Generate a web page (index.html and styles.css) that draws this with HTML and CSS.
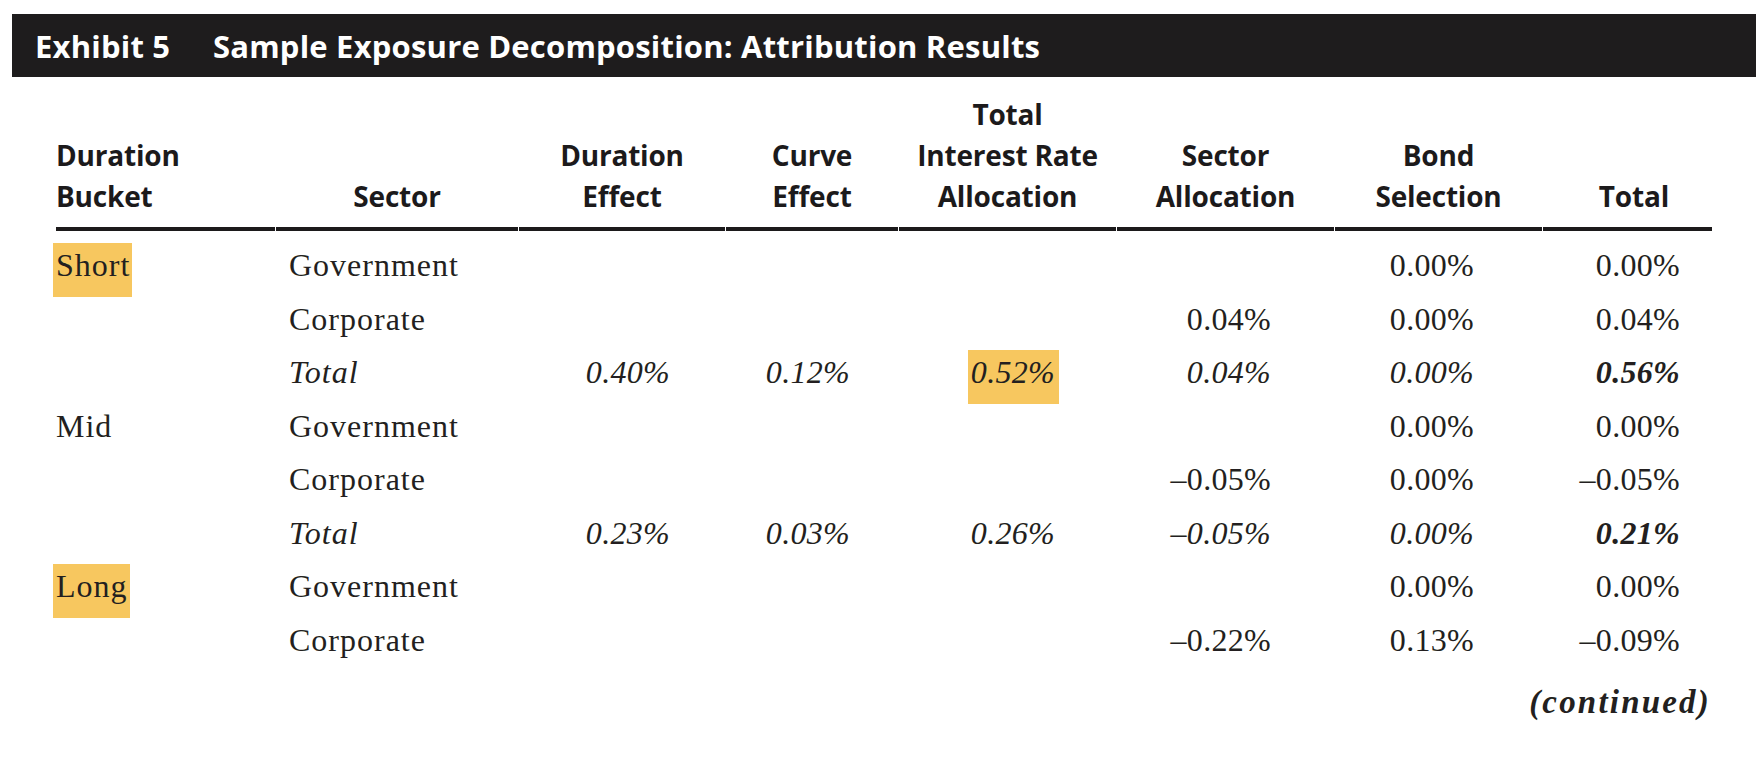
FILE: index.html
```html
<!DOCTYPE html>
<html lang="en">
<head>
<meta charset="utf-8">
<title>Exhibit 5</title>
<link rel="stylesheet" href="styles.css">
</head>
<body>
<div class="exhibit-bar">
  <span class="exhibit-label">Exhibit 5</span>
  <span class="exhibit-title">Sample Exposure Decomposition: Attribution Results</span>
</div>
<table class="attr">
  <colgroup>
    <col class="c1"><col class="c2"><col class="c3"><col class="c4"><col class="c5"><col class="c6"><col class="c7"><col class="c8">
  </colgroup>
  <thead>
    <tr>
      <th class="h-left">Duration<br>Bucket</th>
      <th>Sector</th>
      <th>Duration<br>Effect</th>
      <th>Curve<br>Effect</th>
      <th>Total<br>Interest Rate<br>Allocation</th>
      <th>Sector<br>Allocation</th>
      <th>Bond<br>Selection</th>
      <th class="h-total">Total</th>
    </tr>
  </thead>
  <tbody>
    <tr class="first">
      <td class="d1"><span class="hl hl-left">Short</span></td>
      <td class="d2">Government</td>
      <td class="num d3"></td><td class="num d4"></td><td class="num d5"></td><td class="num d6"></td>
      <td class="num d7">0.00%</td><td class="num d8">0.00%</td>
    </tr>
    <tr>
      <td class="d1"></td>
      <td class="d2">Corporate</td>
      <td class="num d3"></td><td class="num d4"></td><td class="num d5"></td>
      <td class="num d6">0.04%</td><td class="num d7">0.00%</td><td class="num d8">0.04%</td>
    </tr>
    <tr class="sub">
      <td class="d1"></td>
      <td class="d2">Total</td>
      <td class="num d3">0.40%</td><td class="num d4">0.12%</td>
      <td class="num d5"><span class="hl hl-right">0.52%</span></td>
      <td class="num d6">0.04%</td><td class="num d7">0.00%</td><td class="num d8 grand">0.56%</td>
    </tr>
    <tr>
      <td class="d1">Mid</td>
      <td class="d2">Government</td>
      <td class="num d3"></td><td class="num d4"></td><td class="num d5"></td><td class="num d6"></td>
      <td class="num d7">0.00%</td><td class="num d8">0.00%</td>
    </tr>
    <tr>
      <td class="d1"></td>
      <td class="d2">Corporate</td>
      <td class="num d3"></td><td class="num d4"></td><td class="num d5"></td>
      <td class="num d6">–0.05%</td><td class="num d7">0.00%</td><td class="num d8">–0.05%</td>
    </tr>
    <tr class="sub">
      <td class="d1"></td>
      <td class="d2">Total</td>
      <td class="num d3">0.23%</td><td class="num d4">0.03%</td><td class="num d5">0.26%</td>
      <td class="num d6">–0.05%</td><td class="num d7">0.00%</td><td class="num d8 grand">0.21%</td>
    </tr>
    <tr>
      <td class="d1"><span class="hl hl-left">Long</span></td>
      <td class="d2">Government</td>
      <td class="num d3"></td><td class="num d4"></td><td class="num d5"></td><td class="num d6"></td>
      <td class="num d7">0.00%</td><td class="num d8">0.00%</td>
    </tr>
    <tr>
      <td class="d1"></td>
      <td class="d2">Corporate</td>
      <td class="num d3"></td><td class="num d4"></td><td class="num d5"></td>
      <td class="num d6">–0.22%</td><td class="num d7">0.13%</td><td class="num d8">–0.09%</td>
    </tr>
  </tbody>
</table>
<div class="continued">(continued)</div>
</body>
</html>
```

FILE: styles.css
```css
html, body {
  margin: 0;
  padding: 0;
  background: #ffffff;
}

body {
  width: 1759px;
  height: 779px;
  overflow: hidden;
  color: #231f20;
}

.exhibit-bar {
  margin: 14px 3px 0 12px;
  height: 63px;
  background: #1e1c1d;
  display: flex;
  align-items: center;
  padding-left: 23px;
  color: #ffffff;
  font-family: "Open Sans", "Liberation Sans", sans-serif;
  font-weight: 700;
  font-size: 31px;
  letter-spacing: 0.2px;
  white-space: nowrap;
}

.exhibit-label {
  width: 178px;
  flex: 0 0 178px;
}

.attr {
  margin: 17px 0 0 55px;
  border-collapse: separate;
  border-spacing: 1px 0;
  table-layout: fixed;
  width: 1657px;
}

.c1 { width: 219px; }
.c2 { width: 242px; }
.c3 { width: 206px; }
.c4 { width: 172px; }
.c5 { width: 217px; }
.c6 { width: 217px; }
.c7 { width: 207px; }
.c8 { width: 169px; }

.attr th {
  font-family: "Open Sans", "Liberation Sans", sans-serif;
  font-weight: 700;
  font-size: 28px;
  line-height: 41px;
  color: #1c1a1b;
  text-align: center;
  vertical-align: bottom;
  padding: 0 0 10px 0;
  border-bottom: 4px solid #1c1a1b;
  white-space: nowrap;
  letter-spacing: -0.2px;
}

.attr th.h-left {
  text-align: left;
}

.attr th.h-total {
  text-align: right;
  padding-right: 43px;
}

.attr td {
  font-family: "Liberation Serif", "Times New Roman", serif;
  font-size: 32px;
  letter-spacing: 1px;
  line-height: 45.5px;
  height: 45.5px;
  padding: 0 0 8px 0;
  text-align: right;
  vertical-align: top;
  white-space: nowrap;
}

.attr td.num {
  letter-spacing: 0.3px;
}

.attr tr.first td {
  padding-top: 12px;
}

.attr td.d1 { text-align: left; }
.attr td.d2 { text-align: left; padding-left: 13px; }
.attr td.d3 { padding-right: 55px; }
.attr td.d4 { padding-right: 48px; }
.attr td.d5 { padding-right: 61px; }
.attr td.d6 { padding-right: 63px; }
.attr td.d7 { padding-right: 68px; }
.attr td.d8 { padding-right: 32px; }

.attr tr.sub td {
  font-style: italic;
}

.attr td.grand {
  font-weight: 700;
}

.hl {
  display: inline-block;
  background: #f7c75f;
  line-height: 45.5px;
  padding-bottom: 8px;
  margin-bottom: -8px;
}

.hl-left {
  padding-left: 3px;
  padding-right: 2px;
  margin-left: -3px;
  margin-right: -2px;
}

.hl-right {
  padding-left: 3px;
  padding-right: 4px;
  margin-left: -3px;
  margin-right: -4px;
}

.continued {
  margin: 11px 48px 0 0;
  text-align: right;
  font-family: "Liberation Serif", "Times New Roman", serif;
  font-style: italic;
  font-weight: 700;
  font-size: 33px;
  letter-spacing: 2.2px;
  line-height: 40px;
}
```
